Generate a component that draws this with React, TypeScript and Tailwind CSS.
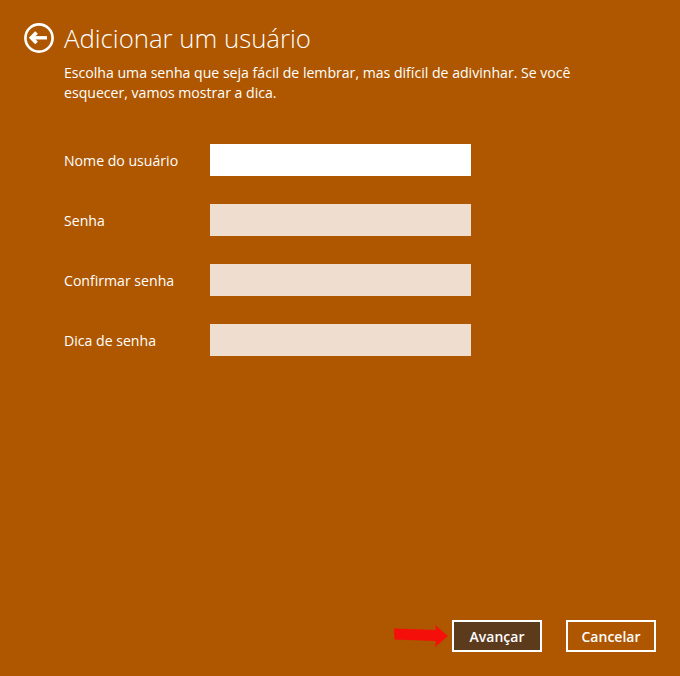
const BackIcon = () => (
  <svg width="32" height="32" viewBox="0 0 32 32" fill="none" aria-hidden="true">
    <circle cx="16" cy="16" r="13.6" stroke="white" strokeWidth="2.6" />
    <path d="M13.5 10.5 L8.5 15.8 L13.5 21" stroke="white" strokeWidth="3.8" />
    <path d="M9 15.8 H24" stroke="white" strokeWidth="3.4" />
  </svg>
);

const RedArrow = () => (
  <svg width="54" height="24" viewBox="0 0 54 24" className="mr-[4px]" aria-hidden="true">
    <path d="M0 4.5 L42 6 L41 1 L54 12 L41 23 L42 17 L0.5 15.5 Z" fill="#f40f0a" />
  </svg>
);

const fields = [
  { label: "Nome do usuário", bg: "bg-white" },
  { label: "Senha", bg: "bg-[#efddcf]" },
  { label: "Confirmar senha", bg: "bg-[#efddcf]" },
  { label: "Dica de senha", bg: "bg-[#efddcf]" },
];

export default function App() {
  return (
    <div className="w-[680px] h-[676px] bg-[#ae5700] text-white flex flex-col justify-between overflow-hidden font-['Open_Sans','Noto_Sans',sans-serif]">
      <div>
        <div className="flex items-center gap-[9px] pl-[23px] pt-[22px]">
          <BackIcon />
          <h1 className="text-[25.75px] leading-[32px] font-light">Adicionar um usuário</h1>
        </div>
        <p className="ml-[64px] mt-[9px] w-[540px] text-[14.1px] leading-[20px]">
          Escolha uma senha que seja fácil de lembrar, mas difícil de adivinhar. Se você esquecer, vamos mostrar a dica.
        </p>
        <div className="mt-[41px] ml-[64px] flex flex-col gap-[28px]">
          {fields.map((f) => (
            <div key={f.label} className="flex items-center">
              <label className="w-[146px] text-[14.1px] leading-[21px]">{f.label}</label>
              <div className={`w-[261px] h-[32px] ${f.bg}`} />
            </div>
          ))}
        </div>
      </div>
      <div className="flex items-center justify-end pr-[24px] pb-[24px]">
        <RedArrow />
        <button className="w-[90px] h-[32px] border-2 border-white bg-[#5c3a1c] text-[14px] font-semibold">Avançar</button>
        <button className="w-[90px] h-[32px] ml-[24px] border-2 border-white text-[14px] font-semibold">Cancelar</button>
      </div>
    </div>
  );
}
